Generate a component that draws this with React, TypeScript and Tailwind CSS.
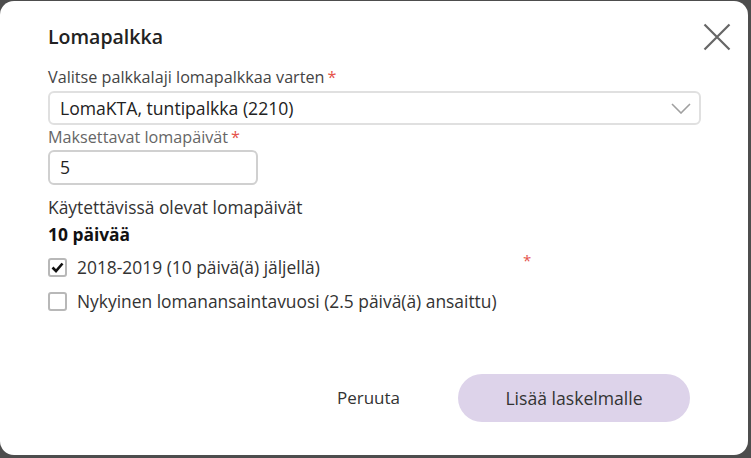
function Req() {
  return <span className="ml-[3px] text-[#e5534b]">*</span>;
}

export default function App() {
  return (
    <div className="h-[458px] w-[751px] overflow-hidden bg-[#4d4d4d] pt-px font-['Open_Sans',sans-serif]">
      <div className="relative flex h-[454px] w-[748px] flex-col rounded-[14px] bg-white px-12 pt-[20px] text-[#2b2b2b]">
        {/* Header */}
        <div className="flex h-[32px] items-center justify-between">
          <h2 className="text-[19.5px] font-semibold leading-[32px] text-[#222]">Lomapalkka</h2>
          <button className="-mr-[31px] text-[#666]">
            <svg width="28" height="28" viewBox="0 0 28 28" fill="none" stroke="currentColor" strokeWidth="2.2">
              <path d="M1.5 1.5 26.5 26.5M26.5 1.5 1.5 26.5" />
            </svg>
          </button>
        </div>

        {/* Pay type select */}
        <label className="mt-[13px] text-[16.2px] leading-[22px] text-[#444]">
          Valitse palkkalaji lomapalkkaa varten
          <Req />
        </label>
        <div className="mt-[3px] flex h-[34px] w-[653px] items-center justify-between rounded-[6px] border-2 border-[#e0e0e0] pl-[10px] pr-[8px]">
          <span className="text-[17.6px] text-[#222]">LomaKTA, tuntipalkka (2210)</span>
          <svg width="20" height="11" viewBox="0 0 20 11" fill="none" stroke="#a0a0a0" strokeWidth="1.6">
            <path d="M1 1 10 10 19 1" />
          </svg>
        </div>

        {/* Days input */}
        <label className="mt-[1px] text-[16.2px] leading-[22px] text-[#666]">
          Maksettavat lomapäivät
          <Req />
        </label>
        <div className="mt-[2px] flex h-[35px] w-[210px] items-center rounded-[6px] border-2 border-[#d0d0d0] pl-[10px]">
          <span className="text-[17.6px] text-[#222]">5</span>
        </div>

        {/* Available days */}
        <p className="mt-[11px] text-[17.4px] leading-[22px] text-[#333]">Käytettävissä olevat lomapäivät</p>
        <p className="mt-[5px] text-[17.4px] font-bold leading-[22px] text-[#111]">10 päivää</p>

        <div className="relative mt-[12px] flex flex-col gap-[14px]">
          <label className="flex h-[20px] items-center gap-[10px]">
            <span className="flex size-[19px] items-center justify-center rounded-[3px] border-2 border-[#b8b8b8] bg-white">
              <svg width="13" height="11" viewBox="0 0 13 11" fill="none" stroke="#111" strokeWidth="2.6">
                <path d="M1.5 5.5 5 9 11.5 1.5" />
              </svg>
            </span>
            <span className="text-[17.4px] leading-[20px] text-[#333]">2018-2019 (10 päivä(ä) jäljellä)</span>
          </label>
          <span className="absolute left-[475px] top-[-8px] text-[15px] text-[#e5534b]">*</span>
          <label className="flex h-[20px] items-center gap-[10px]">
            <span className="size-[19px] rounded-[3px] border-2 border-[#b8b8b8] bg-white" />
            <span className="text-[17.4px] leading-[20px] text-[#333]">
              Nykyinen lomanansaintavuosi (2.5 päivä(ä) ansaittu)
            </span>
          </label>
        </div>

        {/* Footer */}
        <div className="mt-auto mb-[33px] flex items-center justify-end gap-[58px] pr-[10px]">
          <button className="text-[17px] text-[#333]">Peruuta</button>
          <button className="h-[48px] w-[232px] rounded-full bg-[#ddd3ea] text-[17.6px] text-[#333]">
            Lisää laskelmalle
          </button>
        </div>
      </div>
    </div>
  );
}
